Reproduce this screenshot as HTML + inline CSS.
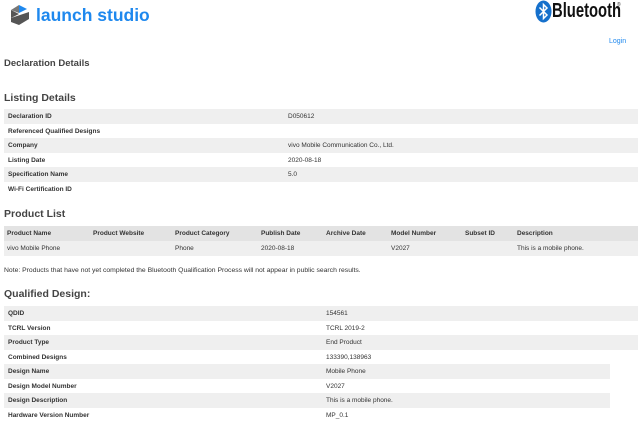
<!DOCTYPE html>
<html><head><meta charset="utf-8"><style>
*{margin:0;padding:0;box-sizing:border-box}
body{width:642px;height:420px;overflow:hidden;background:#fff;font-family:"Liberation Sans",sans-serif;color:#333;position:relative}
.a{position:absolute;white-space:nowrap}
h{position:absolute;font-weight:bold;color:#444;white-space:nowrap}
.row{position:absolute;left:4px;height:14.5px;font-size:6.5px;color:#333}
.row span{position:absolute;top:4px}
.g{background:#efefef}
.b{font-weight:bold}
</style></head><body>
<svg class="a" style="left:9px;top:3px" width="22" height="24" viewBox="0 0 22 24">
<polygon points="2,7 10,11 2,15" fill="#555"/>
<polygon points="10,2 18,6 10,10" fill="#1e88ee"/>
<polygon points="2,15 20,9 20,16 10,22 2,19" fill="#555"/>
<polygon points="10,2 10,10 2,7" fill="#777"/>
</svg>
<div class="a" style="left:36px;top:5px;font-size:17.5px;font-weight:bold;color:#1e88ee">launch studio</div>
<svg class="a" style="left:535px;top:0px" width="17" height="23" viewBox="0 0 17 23">
<ellipse cx="8.5" cy="11.5" rx="8" ry="11" fill="#1570cc"/>
<path d="M4.5 7.5 L12 15 L8.5 18.5 V4.5 L12 8 L4.5 15.5" stroke="#fff" stroke-width="1.5" fill="none"/>
</svg>
<div class="a" style="left:552px;top:0px;font-size:20px;font-weight:bold;color:#111;transform:scaleX(.74);transform-origin:left">Bluetooth</div>
<div class="a" style="left:617px;top:2px;font-size:5px">®</div>
<div class="a" style="left:609px;top:38px;font-size:7px;color:#1e88ee">Login</div>
<h style="left:4px;top:58px;font-size:9.5px">Declaration Details</h>
<h style="left:4px;top:92px;font-size:10.5px">Listing Details</h>
<div class="row g b" style="top:109px;width:634px"><span style="left:4px">Declaration ID</span><span style="left:284px;font-weight:normal">D050612</span></div>
<div class="row b" style="top:123.5px;width:634px"><span style="left:4px">Referenced Qualified Designs</span></div>
<div class="row g b" style="top:138px;width:634px"><span style="left:4px">Company</span><span style="left:284px;font-weight:normal">vivo Mobile Communication Co., Ltd.</span></div>
<div class="row b" style="top:152.5px;width:634px"><span style="left:4px">Listing Date</span><span style="left:284px;font-weight:normal">2020-08-18</span></div>
<div class="row g b" style="top:167px;width:634px"><span style="left:4px">Specification Name</span><span style="left:284px;font-weight:normal">5.0</span></div>
<div class="row b" style="top:181.5px;width:634px"><span style="left:4px">Wi-Fi Certification ID</span></div>
<h style="left:4px;top:208px;font-size:10.5px">Product List</h>
<div class="row b" style="top:226px;width:634px;height:15px;background:#e3e3e3"><span style="left:3px">Product Name</span><span style="left:89px">Product Website</span><span style="left:171px">Product Category</span><span style="left:257px">Publish Date</span><span style="left:322px">Archive Date</span><span style="left:387px">Model Number</span><span style="left:461px">Subset ID</span><span style="left:513px">Description</span></div>
<div class="row g" style="top:241px;width:634px;height:15px"><span style="left:3px">vivo Mobile Phone</span><span style="left:171px">Phone</span><span style="left:257px">2020-08-18</span><span style="left:387px">V2027</span><span style="left:513px">This is a mobile phone.</span></div>
<div class="a" style="left:4px;top:267px;font-size:6.8px;color:#333">Note: Products that have not yet completed the Bluetooth Qualification Process will not appear in public search results.</div>
<h style="left:4px;top:288px;font-size:10.5px">Qualified Design:</h>
<div class="row g b" style="top:306px;width:634px"><span style="left:4px">QDID</span><span style="left:322px;font-weight:normal">154561</span></div>
<div class="row b" style="top:320.5px;width:634px"><span style="left:4px">TCRL Version</span><span style="left:322px;font-weight:normal">TCRL 2019-2</span></div>
<div class="row g b" style="top:335px;width:634px"><span style="left:4px">Product Type</span><span style="left:322px;font-weight:normal">End Product</span></div>
<div class="row b" style="top:349.5px;width:634px"><span style="left:4px">Combined Designs</span><span style="left:322px;font-weight:normal">133390,138963</span></div>
<div class="row g b" style="top:364px;width:606px"><span style="left:4px">Design Name</span><span style="left:322px;font-weight:normal">Mobile Phone</span></div>
<div class="row b" style="top:378.5px;width:606px"><span style="left:4px">Design Model Number</span><span style="left:322px;font-weight:normal">V2027</span></div>
<div class="row g b" style="top:393px;width:606px"><span style="left:4px">Design Description</span><span style="left:322px;font-weight:normal">This is a mobile phone.</span></div>
<div class="row b" style="top:407.5px;width:606px"><span style="left:4px">Hardware Version Number</span><span style="left:322px;font-weight:normal">MP_0.1</span></div>
</body></html>
